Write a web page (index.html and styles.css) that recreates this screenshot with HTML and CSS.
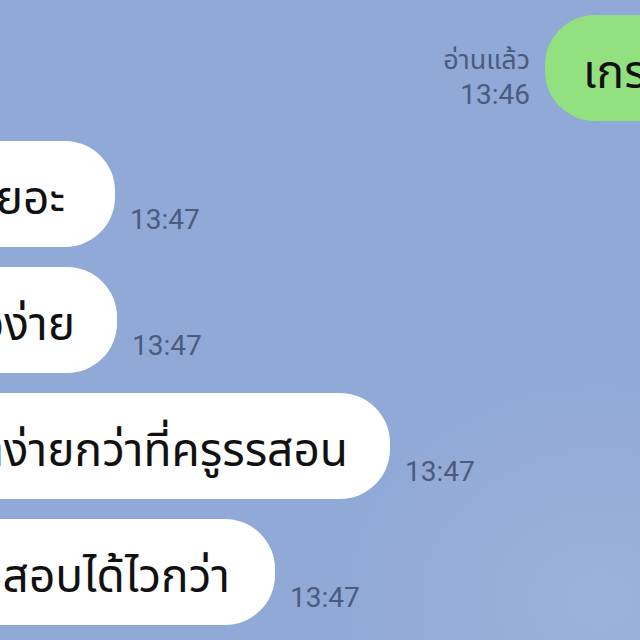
FILE: index.html
```html
<!DOCTYPE html>
<html lang="th">
<head>
    <meta charset="UTF-8">
    <meta name="viewport" content="width=device-width, initial-scale=1.0">
    <title>Chat</title>
    <link rel="stylesheet" href="styles.css">
</head>
<body>

    <div class="chat">
        <!-- outgoing -->
        <div class="row row-out">
            <div class="meta meta-out">
                <span class="read">อ่านแล้ว</span>
                <span class="time">13:46</span>
            </div>
            <div class="bubble bubble-out">เกรงใจ</div>
        </div>

        <!-- incoming -->
        <div class="row row-in">
            <div class="bubble bubble-in w-1"><span>มันเยอะ</span></div>
            <div class="meta"><span class="time">13:47</span></div>
        </div>
        <div class="row row-in">
            <div class="bubble bubble-in w-2"><span>เข้าใจง่าย</span></div>
            <div class="meta"><span class="time">13:47</span></div>
        </div>
        <div class="row row-in">
            <div class="bubble bubble-in w-3"><span>ทำง่ายกว่าที่ครูรรสอน</span></div>
            <div class="meta"><span class="time">13:47</span></div>
        </div>
        <div class="row row-in">
            <div class="bubble bubble-in w-4"><span>ทำข้อสอบได้ไวกว่า</span></div>
            <div class="meta"><span class="time">13:47</span></div>
        </div>
    </div>

</body>
</html>
```

FILE: styles.css
```css
:root {
    --bg: #91a9d6; --green: #93e081; --white: #FFFFFF;
    --text: #111111; --meta: #4b5b7f;
}
html, body { height: 100%; }
body {
    margin: 0; overflow: hidden;
    background: radial-gradient(ellipse 260px 220px at 600px 600px, #9cb2dc 0%, rgba(156,178,220,0) 100%), var(--bg);
    font-family: "Noto Sans Thai", "Noto Sans", "DejaVu Sans", sans-serif;
    color: var(--text);
}
.chat {
    display: flex; flex-direction: column; gap: 20px;
    padding-top: 15px; width: 640px;
}
.row { display: flex; align-items: flex-end; gap: 15px; }
.row-out { justify-content: flex-end; }

.bubble {
    height: 106px; box-sizing: border-box; border-radius: 50px;
    display: flex; align-items: center; white-space: nowrap; overflow: hidden;
    font-size: 46px; line-height: 1;
}
.bubble-out {
    background-color: var(--green); width: 200px; margin-right: -105px;
    padding-left: 38px; padding-top: 12px; flex-shrink: 0;
}
.bubble-in {
    background-color: var(--white); justify-content: flex-end;
    margin-left: -60px; padding-right: 42px; flex-shrink: 0;
}
.bubble span { padding-top: 12px; }
.w-1 { width: 175px; padding-right: 50px; }
.w-2 { width: 177px; }
.w-3 { width: 450px; }
.w-4 { width: 335px; padding-right: 45px; }

.meta {
    display: flex; flex-direction: column; align-items: flex-end;
    color: var(--meta); margin-bottom: 11px;
}
.meta-out { margin-bottom: 10px; }
.time { font-family: Roboto, "Liberation Sans", sans-serif; font-size: 28px; line-height: 32px; }
.read { font-size: 27px; line-height: 36px; }
```
